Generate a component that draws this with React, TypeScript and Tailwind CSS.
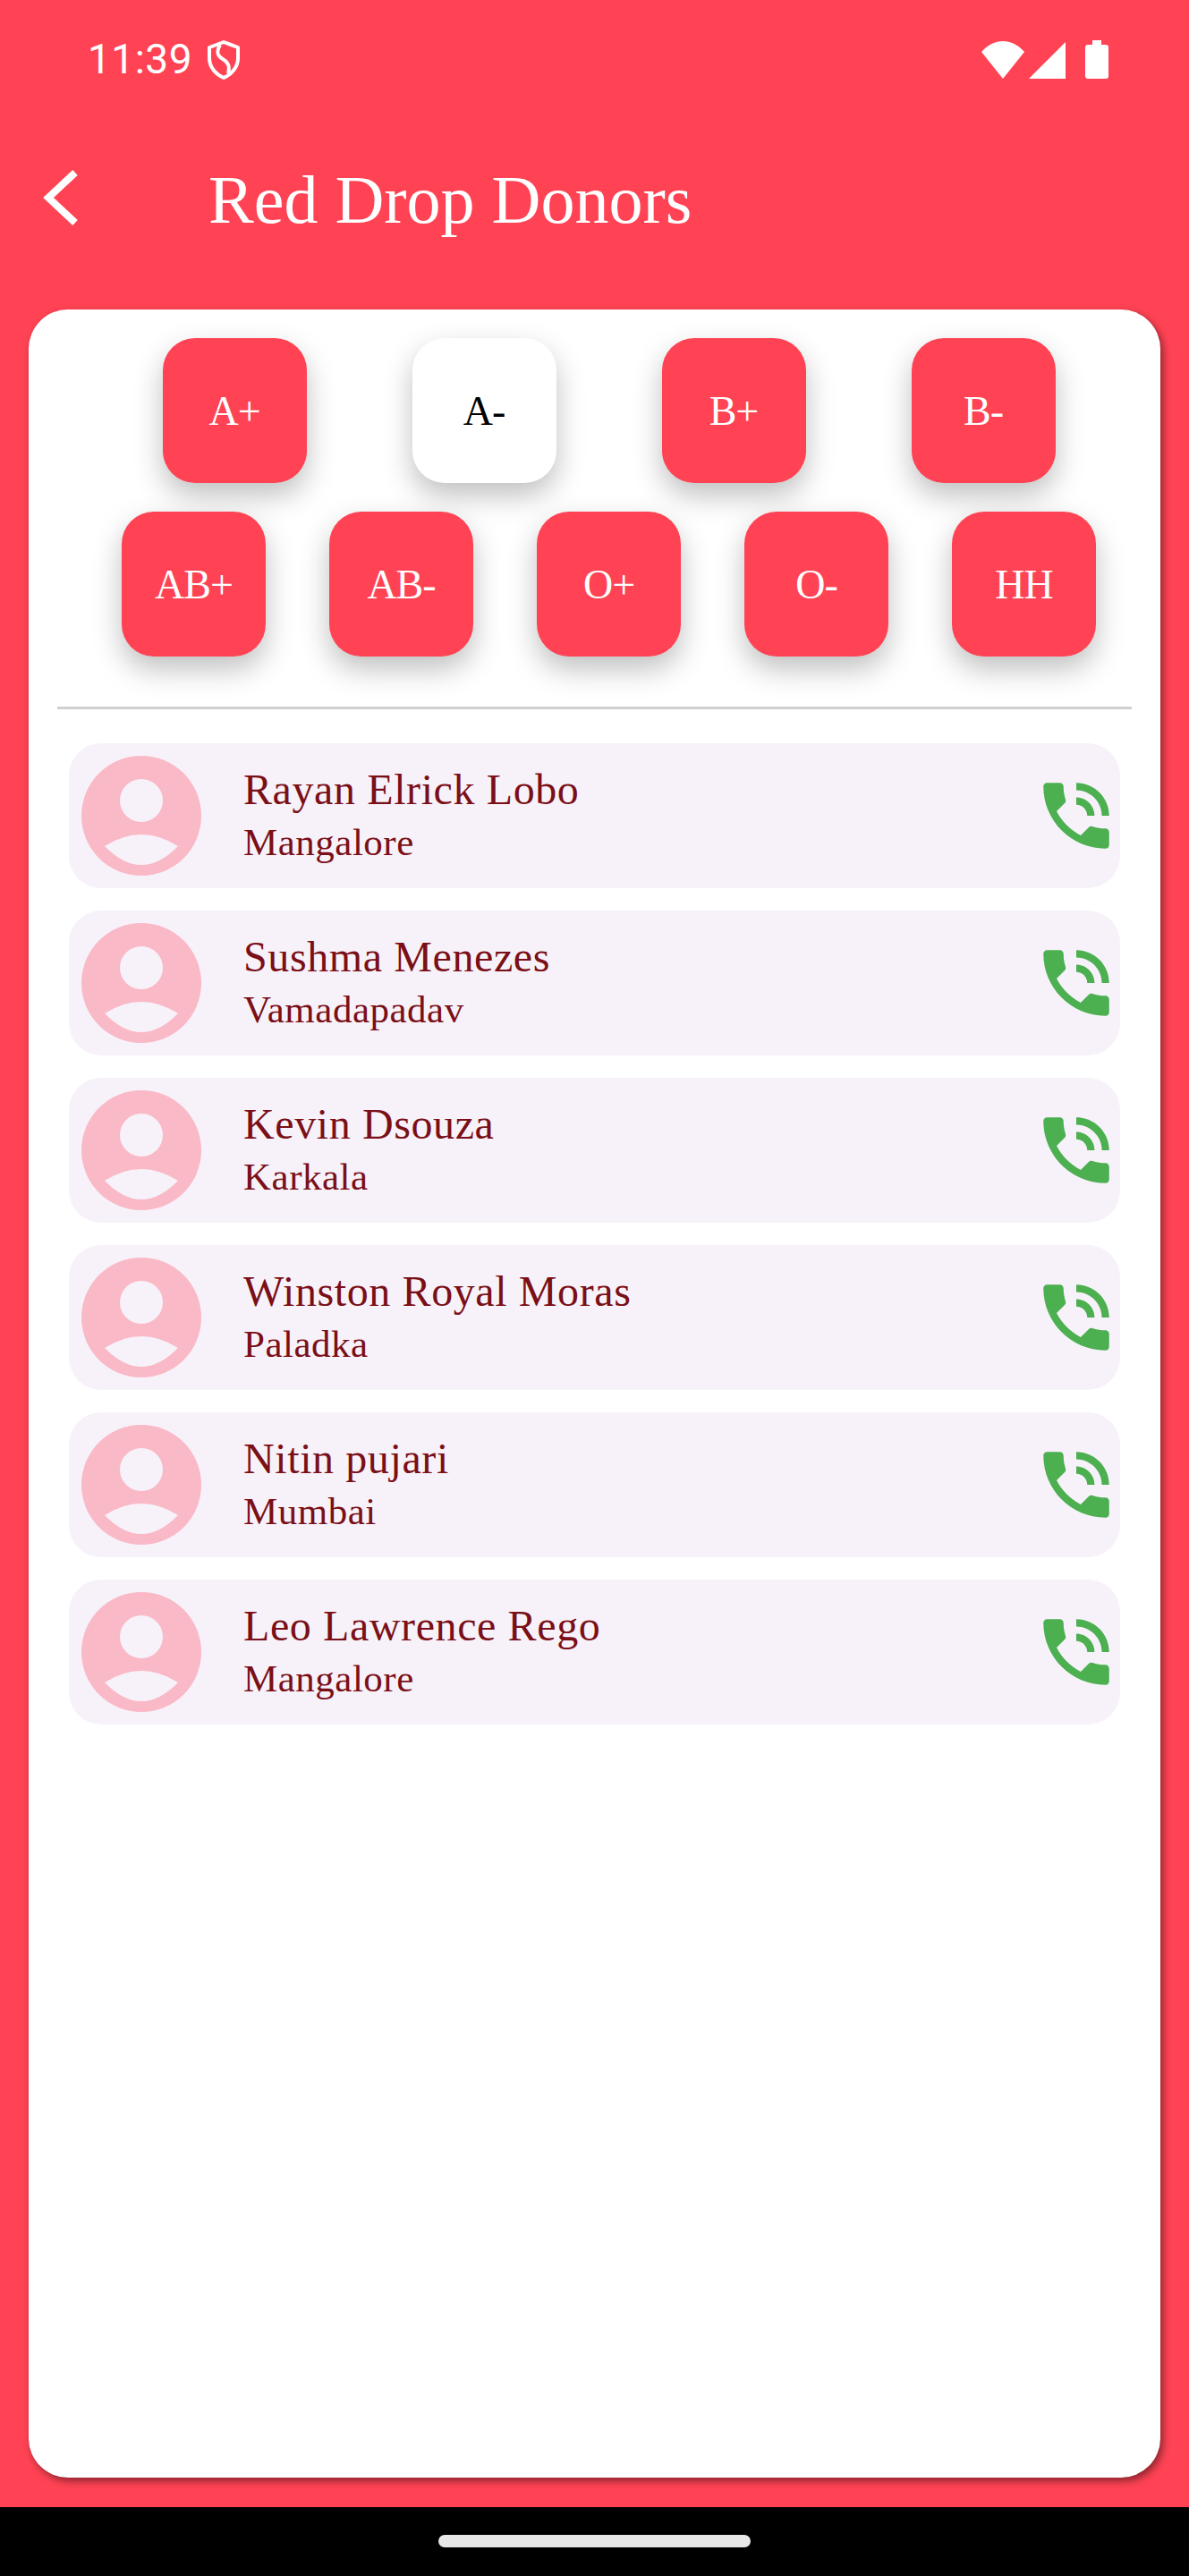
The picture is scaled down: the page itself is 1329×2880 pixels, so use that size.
import React from "react";

const row1 = ["A+", "A-", "B+", "B-"];
const row2 = ["AB+", "AB-", "O+", "O-", "HH"];
const donors = [
  ["Rayan Elrick Lobo", "Mangalore"],
  ["Sushma Menezes", "Vamadapadav"],
  ["Kevin Dsouza", "Karkala"],
  ["Winston Royal Moras", "Paladka"],
  ["Nitin pujari", "Mumbai"],
  ["Leo Lawrence Rego", "Mangalore"],
];

function Blood({ label, active }: { label: string; active?: boolean }) {
  return (
    <div
      className={
        "w-[161px] h-[162px] rounded-[36px] flex items-center justify-center text-[46px] tracking-[-1px] shadow-[0_14px_32px_rgba(0,0,0,0.25)] " +
        (active ? "bg-white text-black" : "bg-[#ff4354] text-white")
      }
    >
      {label}
    </div>
  );
}

function Avatar() {
  return (
    <svg width="134" height="134" viewBox="0 0 134 134" className="shrink-0">
      <circle cx="67" cy="67" r="67" fill="#fab9c6" />
      <circle cx="67" cy="50" r="24" fill="#f7f2fa" />
      <path d="M26 101 Q67 75 108 101 Q67 143 26 101Z" fill="#f7f2fa" />
    </svg>
  );
}

function Phone() {
  return (
    <svg width="98" height="98" viewBox="0 0 24 24" fill="#4caf50" className="shrink-0">
      <path d="M20 15.5c-1.25 0-2.45-.2-3.57-.57-.35-.11-.74-.03-1.02.24l-2.2 2.2c-2.83-1.44-5.15-3.75-6.59-6.59l2.2-2.21c.28-.26.36-.65.25-1C8.7 6.45 8.5 5.25 8.5 4c0-.55-.45-1-1-1H4c-.55 0-1 .45-1 1 0 9.39 7.61 17 17 17 .55 0 1-.45 1-1v-3.5c0-.55-.45-1-1-1zM19 12h2c0-4.97-4.03-9-9-9v2c3.87 0 7 3.13 7 7zm-4 0h2c0-2.76-2.24-5-5-5v2c1.66 0 3 1.34 3 3z" />
    </svg>
  );
}

export default function App() {
  return (
    <div className="w-[1329px] h-[2880px] flex flex-col bg-[#ff4354] font-['Liberation_Serif',serif] overflow-hidden">
      {/* status bar */}
      <div className="h-[134px] shrink-0 flex items-start justify-between pt-[45px] pl-[98px] pr-[90px] text-white">
        <div className="flex items-start">
          <span className="font-['Roboto',sans-serif] text-[46px] leading-[42px] tracking-[0.5px]">11:39</span>
          <svg width="36" height="44" viewBox="0 0 36 44" fill="none" stroke="#fff" strokeWidth="4" strokeLinejoin="round" className="ml-[17px]">
            <path d="M18 2 L34 8 V20 C34 30 27 38 18 42 C9 38 2 30 2 20 V8 Z" />
            <path d="M14 5 C10 12 10 17 17 21 C24 25 25 30 23 37" />
          </svg>
        </div>
        <div className="flex items-start">
          <svg width="48" height="42" viewBox="0 0 48 42" fill="#fff" className="mt-[1px]">
            <path d="M0 12 C14 -4 34 -4 48 12 L24 42 Z" />
          </svg>
          <svg width="41" height="41" viewBox="0 0 41 41" fill="#fff" className="ml-[5px] mt-[2px]">
            <path d="M41 0 V41 H0 Z" />
          </svg>
          <svg width="26" height="43" viewBox="0 0 26 43" fill="#fff" className="ml-[22px]">
            <path d="M8 0 H18 V5 H23 Q26 5 26 8 V40 Q26 43 23 43 H3 Q0 43 0 40 V8 Q0 5 3 5 H8 Z" />
          </svg>
        </div>
      </div>

      {/* app bar */}
      <div className="h-[212px] shrink-0 flex items-start pl-[46px] pt-[52px] text-white">
        <svg width="46" height="66" viewBox="0 0 46 66" fill="none" stroke="#fff" strokeWidth="8" className="shrink-0 mt-[2px]">
          <path d="M38 5 L8 33 L38 61" strokeLinecap="butt" />
        </svg>
        <h1 className="ml-[141px] -mt-[5px] text-[76px] leading-[84px] font-normal">Red Drop Donors</h1>
      </div>

      {/* card */}
      <div className="mx-[32px] w-[1265px] h-[2424px] shrink-0 bg-white rounded-[44px] shadow-[3px_4px_8px_rgba(0,0,0,0.45)] pt-[32px] flex flex-col items-center">
        <div className="w-full pl-[32px] flex justify-center gap-[118px]">
          {row1.map((b) => (
            <Blood key={b} label={b} active={b === "A-"} />
          ))}
        </div>
        <div className="w-full pl-[32px] mt-[32px] flex justify-center gap-[71px]">
          {row2.map((b) => (
            <Blood key={b} label={b} />
          ))}
        </div>
        <div className="mt-[56px] w-[1201px] h-[3px] bg-[#cfcfcf]" />
        <div className="mt-[38px] w-[1175px] flex flex-col gap-[25px]">
          {donors.map(([name, place]) => (
            <div key={name} className="h-[162px] bg-[#f7f2fa] rounded-[36px] flex items-center pl-[14px]">
              <Avatar />
              <div className="ml-[47px] flex-1 flex flex-col text-[#7b0f17]">
                <div className="text-[48px] leading-[54px] tracking-[0.6px] -mt-[1px]">{name}</div>
                <div className="text-[43px] leading-[50px] tracking-[0.5px] mt-[7px]">{place}</div>
              </div>
              <Phone />
            </div>
          ))}
        </div>
      </div>

      {/* nav bar */}
      <div className="flex-1 mt-[33px] bg-black flex justify-center pt-[31px]">
        <div className="w-[349px] h-[14px] rounded-full bg-[#e8e8e8]" />
      </div>
    </div>
  );
}
